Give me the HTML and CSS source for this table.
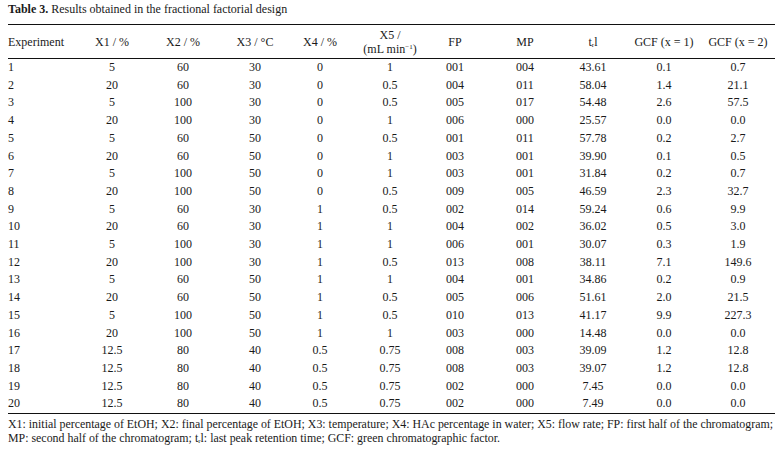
FILE: index.html
```html
<!DOCTYPE html>
<html>
<head>
<meta charset="utf-8">
<link rel="stylesheet" href="styles.css">
</head>
<body>
<p class="caption"><b>Table 3.</b> Results obtained in the fractional factorial design</p>
<table class="results">
<colgroup>
<col class="c-exp"><col class="c-x1"><col class="c-x2"><col class="c-x3"><col class="c-x4"><col class="c-x5"><col class="c-fp"><col class="c-mp"><col class="c-t"><col class="c-g1"><col class="c-g2">
</colgroup>
<thead>
<tr><th class="first">Experiment</th><th>X1 / %</th><th>X2 / %</th><th>X3 / °C</th><th>X4 / %</th><th>X5 /<br>(mL min<sup>−1</sup>)</th><th>FP</th><th>MP</th><th>t<sub>r</sub>l</th><th>GCF (x = 1)</th><th>GCF (x = 2)</th></tr>
</thead>
<tbody>
<tr><td class="first">1</td><td>5</td><td>60</td><td>30</td><td>0</td><td>1</td><td>001</td><td>004</td><td>43.61</td><td>0.1</td><td>0.7</td></tr>
<tr><td class="first">2</td><td>20</td><td>60</td><td>30</td><td>0</td><td>0.5</td><td>004</td><td>011</td><td>58.04</td><td>1.4</td><td>21.1</td></tr>
<tr><td class="first">3</td><td>5</td><td>100</td><td>30</td><td>0</td><td>0.5</td><td>005</td><td>017</td><td>54.48</td><td>2.6</td><td>57.5</td></tr>
<tr><td class="first">4</td><td>20</td><td>100</td><td>30</td><td>0</td><td>1</td><td>006</td><td>000</td><td>25.57</td><td>0.0</td><td>0.0</td></tr>
<tr><td class="first">5</td><td>5</td><td>60</td><td>50</td><td>0</td><td>0.5</td><td>001</td><td>011</td><td>57.78</td><td>0.2</td><td>2.7</td></tr>
<tr><td class="first">6</td><td>20</td><td>60</td><td>50</td><td>0</td><td>1</td><td>003</td><td>001</td><td>39.90</td><td>0.1</td><td>0.5</td></tr>
<tr><td class="first">7</td><td>5</td><td>100</td><td>50</td><td>0</td><td>1</td><td>003</td><td>001</td><td>31.84</td><td>0.2</td><td>0.7</td></tr>
<tr><td class="first">8</td><td>20</td><td>100</td><td>50</td><td>0</td><td>0.5</td><td>009</td><td>005</td><td>46.59</td><td>2.3</td><td>32.7</td></tr>
<tr><td class="first">9</td><td>5</td><td>60</td><td>30</td><td>1</td><td>0.5</td><td>002</td><td>014</td><td>59.24</td><td>0.6</td><td>9.9</td></tr>
<tr><td class="first">10</td><td>20</td><td>60</td><td>30</td><td>1</td><td>1</td><td>004</td><td>002</td><td>36.02</td><td>0.5</td><td>3.0</td></tr>
<tr><td class="first">11</td><td>5</td><td>100</td><td>30</td><td>1</td><td>1</td><td>006</td><td>001</td><td>30.07</td><td>0.3</td><td>1.9</td></tr>
<tr><td class="first">12</td><td>20</td><td>100</td><td>30</td><td>1</td><td>0.5</td><td>013</td><td>008</td><td>38.11</td><td>7.1</td><td>149.6</td></tr>
<tr><td class="first">13</td><td>5</td><td>60</td><td>50</td><td>1</td><td>1</td><td>004</td><td>001</td><td>34.86</td><td>0.2</td><td>0.9</td></tr>
<tr><td class="first">14</td><td>20</td><td>60</td><td>50</td><td>1</td><td>0.5</td><td>005</td><td>006</td><td>51.61</td><td>2.0</td><td>21.5</td></tr>
<tr><td class="first">15</td><td>5</td><td>100</td><td>50</td><td>1</td><td>0.5</td><td>010</td><td>013</td><td>41.17</td><td>9.9</td><td>227.3</td></tr>
<tr><td class="first">16</td><td>20</td><td>100</td><td>50</td><td>1</td><td>1</td><td>003</td><td>000</td><td>14.48</td><td>0.0</td><td>0.0</td></tr>
<tr><td class="first">17</td><td>12.5</td><td>80</td><td>40</td><td>0.5</td><td>0.75</td><td>008</td><td>003</td><td>39.09</td><td>1.2</td><td>12.8</td></tr>
<tr><td class="first">18</td><td>12.5</td><td>80</td><td>40</td><td>0.5</td><td>0.75</td><td>008</td><td>003</td><td>39.07</td><td>1.2</td><td>12.8</td></tr>
<tr><td class="first">19</td><td>12.5</td><td>80</td><td>40</td><td>0.5</td><td>0.75</td><td>002</td><td>000</td><td>7.45</td><td>0.0</td><td>0.0</td></tr>
<tr><td class="first">20</td><td>12.5</td><td>80</td><td>40</td><td>0.5</td><td>0.75</td><td>002</td><td>000</td><td>7.49</td><td>0.0</td><td>0.0</td></tr>
</tbody>
</table>
<p class="note">X1: initial percentage of EtOH; X2: final percentage of EtOH; X3: temperature; X4: HAc percentage in water; X5: flow rate; FP: first half of the chromatogram;<br>MP: second half of the chromatogram; t<sub>r</sub>l: last peak retention time; GCF: green chromatographic factor.</p>
</body>
</html>
```
FILE: styles.css
```css
html, body {
  margin: 0;
  padding: 0;
  background: #fff;
}
body {
  padding: 2px 9px 0 8px;
  font-family: "Liberation Serif", "Times New Roman", serif;
  color: #1a1a1a;
  font-size: 12px;
}
.caption {
  margin: 0 0 8px 0;
  line-height: 14px;
  font-size: 12px;
}
.caption b {
  font-weight: bold;
}
.results {
  width: 767px;
  border-collapse: collapse;
  table-layout: fixed;
  border-top: 1px solid #111;
  border-bottom: 1px solid #111;
}
.c-exp { width: 81px; }
.c-x1 { width: 46px; }
.c-x2 { width: 96px; }
.c-x3 { width: 48px; }
.c-x4 { width: 82px; }
.c-x5 { width: 58px; }
.c-fp { width: 72px; }
.c-mp { width: 68px; }
.c-t { width: 68px; }
.c-g1 { width: 74px; }
.c-g2 { width: 74px; }
.results th {
  font-weight: normal;
  text-align: center;
  vertical-align: middle;
  line-height: 14px;
  padding: 3px 0 2px;
  border-bottom: 1px solid #111;
  white-space: nowrap;
}
.results td {
  text-align: center;
  line-height: 17.7px;
  padding: 0;
  white-space: nowrap;
}
.results .first {
  text-align: left;
}
sub, sup {
  font-size: 7px;
  line-height: 0;
}
sub {
  vertical-align: -1px;
}
sup {
  vertical-align: 4px;
}
.note {
  margin: 3px 0 0 0;
  font-size: 11.9px;
  line-height: 14px;
  white-space: nowrap;
}
```
